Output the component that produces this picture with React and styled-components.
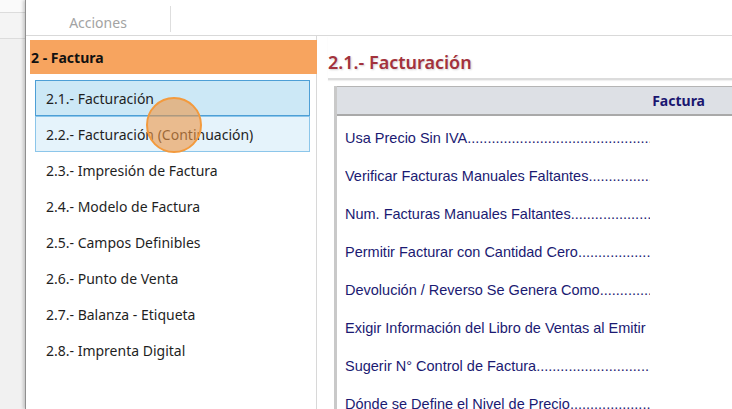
import React from "react";
import styled, { createGlobalStyle } from "styled-components";

const Global = createGlobalStyle`
  html, body { margin: 0; padding: 0; }
  body {
    background: #f0f0f0;
    font-family: "Noto Sans", "Open Sans", sans-serif;
    overflow: hidden;
  }
`;

const Page = styled.div`
  position: relative;
  display: flex;
  width: 732px;
  height: 409px;
  overflow: hidden;
`;

const Backdrop = styled.div`
  width: 25px;
  flex-shrink: 0;
  display: flex;
  flex-direction: column;
  background: #f1f1f1;
`;

const BackdropBand = styled.div`
  height: ${(p) => p.h}px;
  background: ${(p) => p.bg};
  border-bottom: 1px solid #dcdcdc;
`;

const Window = styled.div`
  flex: 1;
  display: flex;
  flex-direction: column;
  background: #fff;
  border-left: 1px solid #8f8f8f;
  box-shadow: -2px 0 3px rgba(0, 0, 0, 0.18);
`;

const Toolbar = styled.div`
  height: 35px;
  flex-shrink: 0;
  display: flex;
  border-bottom: 1px solid #d9d9d9;
`;

const ToolGroup = styled.div`
  width: 144px;
  height: 26px;
  display: flex;
  align-items: flex-end;
  justify-content: center;
  border-right: 1px solid #dedede;
  color: #a3a3a3;
  font-size: 14px;
  line-height: 18px;
  transform: translateY(6px);
`;

const Body = styled.div`
  flex: 1;
  display: flex;
  min-height: 0;
`;

const Sidebar = styled.div`
  width: 286px;
  flex-shrink: 0;
  padding: 4px 0 0 4px;
  border-right: 1px solid #d8d8d8;
  display: flex;
  flex-direction: column;
`;

const SectionHeader = styled.div`
  height: 34px;
  display: flex;
  align-items: center;
  padding-left: 1px;
  background: #f7a45f;
  color: #111;
  font-weight: 700;
  font-size: 14px;
  margin-right: -1px;
`;

const ItemList = styled.div`
  display: flex;
  flex-direction: column;
  padding: 6px 0 0 5px;
  width: 275px;
`;

const Item = styled.div`
  height: 36px;
  box-sizing: border-box;
  display: flex;
  align-items: center;
  padding-left: 10px;
  font-size: 14px;
  color: #1f1f1f;
  border: 1px solid
    ${(p) => (p.$state === "selected" ? "#4d9fd6" : p.$state === "hover" ? "#8cc6ea" : "transparent")};
  background: ${(p) =>
    p.$state === "selected" ? "#cce8f6" : p.$state === "hover" ? "#e5f3fb" : "transparent"};
  & + & {
    margin-top: ${(p) => (p.$state === "hover" ? "-1px" : "0")};
  }
`;

const Content = styled.div`
  flex: 1;
  display: flex;
  flex-direction: column;
  padding-left: 11px;
  min-width: 0;
`;

const Title = styled.div`
  height: 44px;
  flex-shrink: 0;
  box-sizing: border-box;
  display: flex;
  align-items: center;
  padding-top: 9px;
  font-size: 18px;
  font-weight: 600;
  color: #a3323c;
  text-shadow: 1px 1px 2px rgba(0, 0, 0, 0.18);
  border-bottom: 2px solid #dcdcdc;
  box-shadow: 0 1px 1px rgba(0, 0, 0, 0.06);
`;

const Table = styled.div`
  margin: 6px 0 0 6px;
  display: flex;
  flex-direction: column;
  border-left: 3px solid #c9c9c9;
  flex: 1;
`;

const TableHead = styled.div`
  height: 27px;
  flex-shrink: 0;
  display: flex;
  align-items: center;
  justify-content: flex-end;
  padding-right: 27px;
  background: #dde0e5;
  border-top: 1px solid #b5b5b5;
  border-bottom: 2px solid #a9a9a9;
  color: #1a1670;
  font-weight: 700;
  font-size: 14px;
`;

const Rows = styled.div`
  display: flex;
  flex-direction: column;
  padding: 3px 0 0 8px;
`;

const Row = styled.div`
  height: 38px;
  flex-shrink: 0;
  display: flex;
  align-items: center;
`;

const Label = styled.span`
  width: 305px;
  white-space: nowrap;
  overflow: hidden;
  font-family: "Liberation Sans", Arial, sans-serif;
  font-size: 14.5px;
  color: #1b1a72;
`;

const Cursor = styled.div`
  position: absolute;
  left: 146px;
  top: 97px;
  width: 56px;
  height: 56px;
  border-radius: 50%;
  box-sizing: border-box;
  border: 2px solid #f39a3d;
  background: rgba(236, 150, 70, 0.6);
  pointer-events: none;
`;

const items = [
  "2.1.- Facturación",
  "2.2.- Facturación (Continuación)",
  "2.3.- Impresión de Factura",
  "2.4.- Modelo de Factura",
  "2.5.- Campos Definibles",
  "2.6.- Punto de Venta",
  "2.7.- Balanza - Etiqueta",
  "2.8.- Imprenta Digital",
];

const rows = [
  { text: "Usa Precio Sin IVA", leader: true },
  { text: "Verificar Facturas Manuales Faltantes", leader: true },
  { text: "Num. Facturas Manuales Faltantes", leader: true },
  { text: "Permitir Facturar con Cantidad Cero", leader: true },
  { text: "Devolución / Reverso Se Genera Como", leader: true },
  { text: "Exigir Información del Libro de Ventas al Emitir", leader: false },
  { text: "Sugerir N° Control de Factura", leader: true },
  { text: "Dónde se Define el Nivel de Precio", leader: true },
];

const dots = ".".repeat(100);

export default function App() {
  return (
    <>
      <Global />
      <Page>
        <Backdrop>
          <BackdropBand h={12} bg="#fafafa" />
          <BackdropBand h={25} bg="#f4f4f4" />
        </Backdrop>
        <Window>
          <Toolbar>
            <ToolGroup>Acciones</ToolGroup>
          </Toolbar>
          <Body>
            <Sidebar>
              <SectionHeader>2 - Factura</SectionHeader>
              <ItemList>
                {items.map((t, i) => (
                  <Item key={t} $state={i === 0 ? "selected" : i === 1 ? "hover" : "none"}>
                    {t}
                  </Item>
                ))}
              </ItemList>
            </Sidebar>
            <Content>
              <Title>2.1.- Facturación</Title>
              <Table>
                <TableHead>Factura</TableHead>
                <Rows>
                  {rows.map((r) => (
                    <Row key={r.text}>
                      <Label>
                        {r.text}
                        {r.leader && dots}
                      </Label>
                    </Row>
                  ))}
                </Rows>
              </Table>
            </Content>
          </Body>
        </Window>
        <Cursor />
      </Page>
    </>
  );
}
